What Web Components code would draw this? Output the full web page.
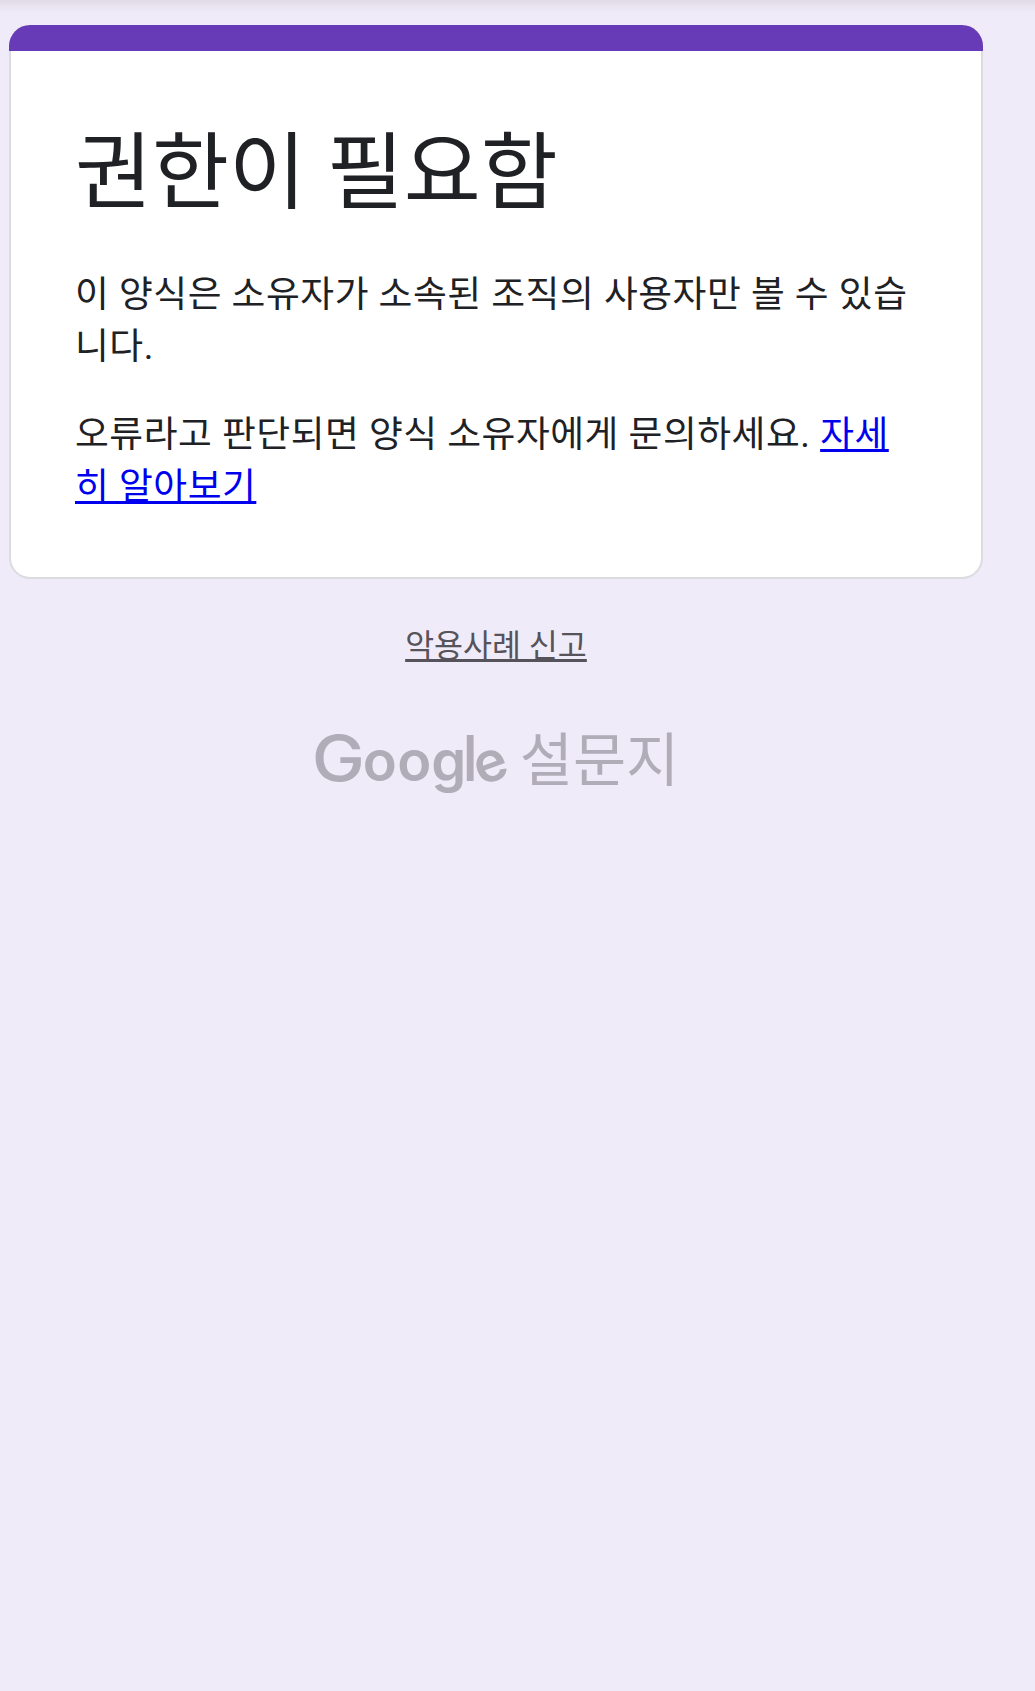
<!DOCTYPE html>
<html lang="ko">
<head>
<meta charset="utf-8">
<title>권한이 필요함</title>
<style>
  html, body {
    margin: 0;
    min-height: 100%;
    background: #f0ebf8;
  }
  body {
    font-family: Roboto, "Noto Sans CJK KR", sans-serif;
    color: #202124;
  }
</style>
</head>
<body>

<template id="formPageTemplate">
  <style>
    :host {
      display: block;
      box-sizing: border-box;
      min-height: 1691px;
      background: linear-gradient(rgba(0, 0, 0, 0.07), rgba(0, 0, 0, 0.03) 6px, rgba(0, 0, 0, 0) 13px) no-repeat;
      padding: 25px 52px 0 9px;
    }
    .column {
      display: flex;
      flex-direction: column;
    }
  </style>
  <div class="column"><slot></slot></div>
</template>

<template id="formCardTemplate">
  <style>
    :host {
      display: block;
      box-sizing: border-box;
      height: 554px;
      border: 2px solid #dadce0;
      border-top: 0;
      border-radius: 21px;
      background: #fff;
    }
    .bar {
      height: 26px;
      margin: 0 -2px;
      border-radius: 21px 21px 0 0;
      background: #673ab7;
    }
    .content {
      padding: 70px 64px 0;
    }
    h1 {
      margin: 0 0 43px;
      font-size: 83.7px;
      font-weight: 400;
      line-height: 105px;
    }
  </style>
  <div class="bar"></div>
  <div class="content">
    <h1></h1>
    <slot></slot>
  </div>
</template>

<template id="formTextTemplate">
  <style>
    :host {
      display: block;
      margin-bottom: 36px;
      font-size: 36.75px;
      line-height: 52px;
      letter-spacing: 0.525px;
    }
    ::slotted(a) {
      color: #0000ee;
      text-decoration: underline;
      text-decoration-thickness: 3px;
      text-decoration-skip-ink: none;
    }
  </style>
  <slot></slot>
</template>

<template id="reportLinkTemplate">
  <style>
    :host {
      display: flex;
      justify-content: center;
      margin-top: 45px;
      font-size: 31.5px;
      line-height: 46px;
    }
    a {
      color: #56535a;
      text-decoration: underline;
      text-decoration-thickness: 3px;
      text-decoration-skip-ink: none;
    }
  </style>
  <a href="#"><slot></slot></a>
</template>

<template id="formsLogoTemplate">
  <style>
    :host {
      display: flex;
      justify-content: center;
      align-items: flex-start;
      gap: 11px;
      margin-top: 51px;
      color: #b1adb8;
    }
    svg {
      display: block;
      width: 196px;
      height: 84px;
      overflow: visible;
    }
    text {
      font: 500 63px Inter, sans-serif;
      fill: currentColor;
    }
    .small {
      font-size: 56px;
      font-weight: 600;
    }
    span {
      font-size: 57.75px;
      line-height: 81px;
    }
  </style>
  <svg viewBox="0 0 196 84" role="img" aria-label="Google">
    <text y="60" x="-1" transform="scale(1.13 1)">G</text>
    <text y="60"><tspan class="small" x="49.7 84.2 118.2">oog</tspan><tspan x="149.3">l</tspan><tspan class="small" x="167.4" y="65" rotate="-20">e</tspan></text>
  </svg>
  <span><slot></slot></span>
</template>

<form-page>
  <form-card heading="권한이 필요함">
    <form-text>이 양식은 소유자가 소속된 조직의 사용자만 볼 수 있습니다.</form-text>
    <form-text>오류라고 판단되면 양식 소유자에게 문의하세요. <a href="#">자세히 알아보기</a></form-text>
  </form-card>
  <report-link>악용사례 신고</report-link>
  <forms-logo>설문지</forms-logo>
</form-page>

<script>
  (function (customElements) {
    'use strict';

    class BaseComponent extends HTMLElement {
      constructor() {
        super();
        const shadowRoot = this.attachShadow({mode: 'open'});
        const templ = document.querySelector('#' + this.constructor.template);
        shadowRoot.appendChild(document.importNode(templ.content, true));
      }
    }

    class FormPage extends BaseComponent {
      static get template() { return 'formPageTemplate'; }
    }

    class FormCard extends BaseComponent {
      static get template() { return 'formCardTemplate'; }

      static get observedAttributes() {
        return ['heading'];
      }

      attributeChangedCallback(name, oldVal, newVal) {
        this.shadowRoot.querySelector('h1').textContent = newVal;
      }
    }

    class FormText extends BaseComponent {
      static get template() { return 'formTextTemplate'; }
    }

    class ReportLink extends BaseComponent {
      static get template() { return 'reportLinkTemplate'; }
    }

    class FormsLogo extends BaseComponent {
      static get template() { return 'formsLogoTemplate'; }
    }

    customElements.define('form-page', FormPage);
    customElements.define('form-card', FormCard);
    customElements.define('form-text', FormText);
    customElements.define('report-link', ReportLink);
    customElements.define('forms-logo', FormsLogo);
  })(window.customElements);
</script>
</body>
</html>
